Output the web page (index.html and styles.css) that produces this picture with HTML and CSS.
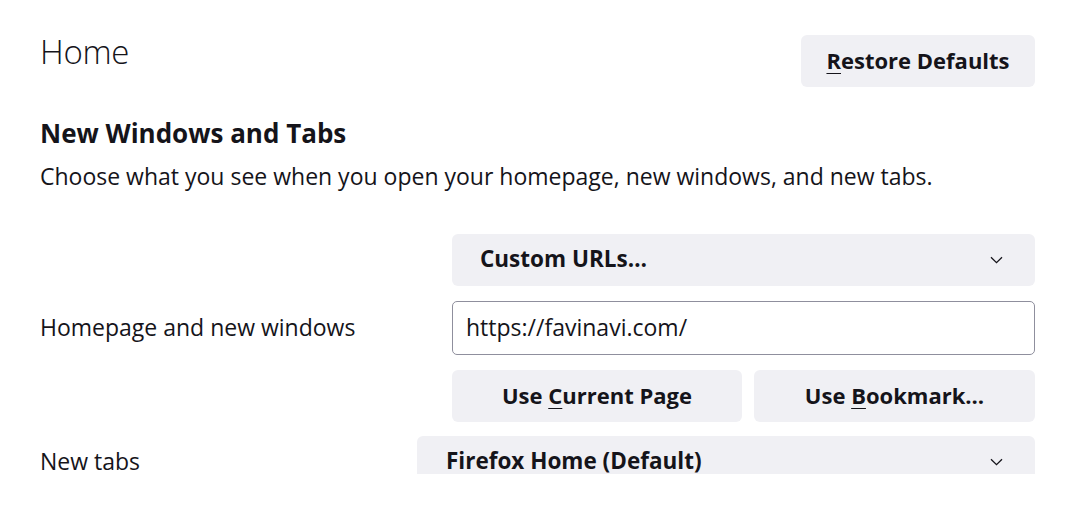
FILE: index.html
```html
<!DOCTYPE html>
<html lang="en">
<head>
<meta charset="utf-8">
<title>Home</title>
<link rel="stylesheet" href="styles.css">
</head>
<body>
<div class="page">
  <div class="header">
    <h1 class="title">Home</h1>
    <button class="btn restore"><span class="btn-label"><span class="ak">R</span>estore Defaults</span></button>
  </div>
  <h2 class="section-title">New Windows and Tabs</h2>
  <p class="desc">Choose what you see when you open your homepage, new windows, and new tabs.</p>

  <div class="row">
    <div class="label">Homepage and new windows</div>
    <div class="controls">
      <div class="select">
        <span class="select-text">Custom URLs…</span>
        <svg class="chev" width="13" height="8" viewBox="0 0 13 8"><path d="M1 1.2 L6.5 6.6 L12 1.2" fill="none" stroke="#15141a" stroke-width="1.3"/></svg>
      </div>
      <div class="input">https://favinavi.com/</div>
      <div class="btn-row">
        <button class="btn cur"><span class="btn-label">Use <span class="ak">C</span>urrent Page</span></button>
        <button class="btn bm"><span class="btn-label">Use <span class="ak">B</span>ookmark…</span></button>
      </div>
    </div>
  </div>

  <div class="row row-tabs">
    <div class="label label-tabs">New tabs</div>
    <div class="select select-wide">
      <span class="select-text">Firefox Home (Default)</span>
      <svg class="chev" width="13" height="8" viewBox="0 0 13 8"><path d="M1 1.2 L6.5 6.6 L12 1.2" fill="none" stroke="#15141a" stroke-width="1.3"/></svg>
    </div>
  </div>
</div>
</body>
</html>
```

FILE: styles.css
```css
html, body {
  margin: 0;
  padding: 0;
  background: #ffffff;
}
body {
  font-family: "Open Sans", "Noto Sans", sans-serif;
  color: #15141a;
}
.page {
  height: 474px;
  overflow: hidden;
  padding: 0 45px 0 40px;
}
.header {
  display: flex;
  justify-content: space-between;
  align-items: flex-start;
  padding-top: 35px;
}
.title {
  margin: 0;
  font-size: 33px;
  font-weight: 300;
  line-height: 34px;
  letter-spacing: -0.3px;
}
.btn {
  font-family: inherit;
  color: #15141a;
  background: #f0f0f4;
  border: none;
  border-radius: 6px;
  height: 52px;
  font-size: 22px;
  font-weight: 700;
  padding: 0 0 2px;
  display: flex;
  align-items: center;
  justify-content: center;
}
.btn-label {
  white-space: pre;
}
.restore {
  width: 234px;
}
.ak {
  text-decoration: underline;
  text-decoration-thickness: 1px;
  text-underline-offset: 4px;
}
.section-title {
  margin: 30px 0 0;
  font-size: 26px;
  font-weight: 700;
  line-height: 32px;
}
.desc {
  margin: 13px 0 0;
  font-size: 23px;
  line-height: 28px;
}
.row {
  display: flex;
  justify-content: space-between;
  align-items: center;
  margin-top: 44px;
}
.label {
  font-size: 23px;
  line-height: 28px;
  padding-bottom: 2px;
}
.label-tabs {
  line-height: 22px;
  padding-bottom: 3px;
}
.controls {
  width: 583px;
  display: flex;
  flex-direction: column;
  gap: 15px;
}
.select {
  height: 52px;
  background: #f0f0f4;
  border-radius: 6px;
  display: flex;
  align-items: center;
  justify-content: space-between;
  padding: 0 32px 0 28px;
  box-sizing: border-box;
}
.select-text {
  font-size: 22.5px;
  font-weight: 700;
  line-height: 28px;
  padding-bottom: 2px;
}
.chev {
  display: block;
}
.input {
  height: 54px;
  box-sizing: border-box;
  border: 1px solid #8f8f9d;
  border-radius: 5px;
  padding: 0 13px 2px;
  display: flex;
  align-items: center;
  font-size: 23px;
}
.btn-row {
  display: flex;
  gap: 12px;
}
.cur {
  width: 290px;
}
.bm {
  width: 281px;
}
.row-tabs {
  margin-top: 14px;
}
.select-wide {
  width: 618px;
  padding-left: 29px;
}
```
